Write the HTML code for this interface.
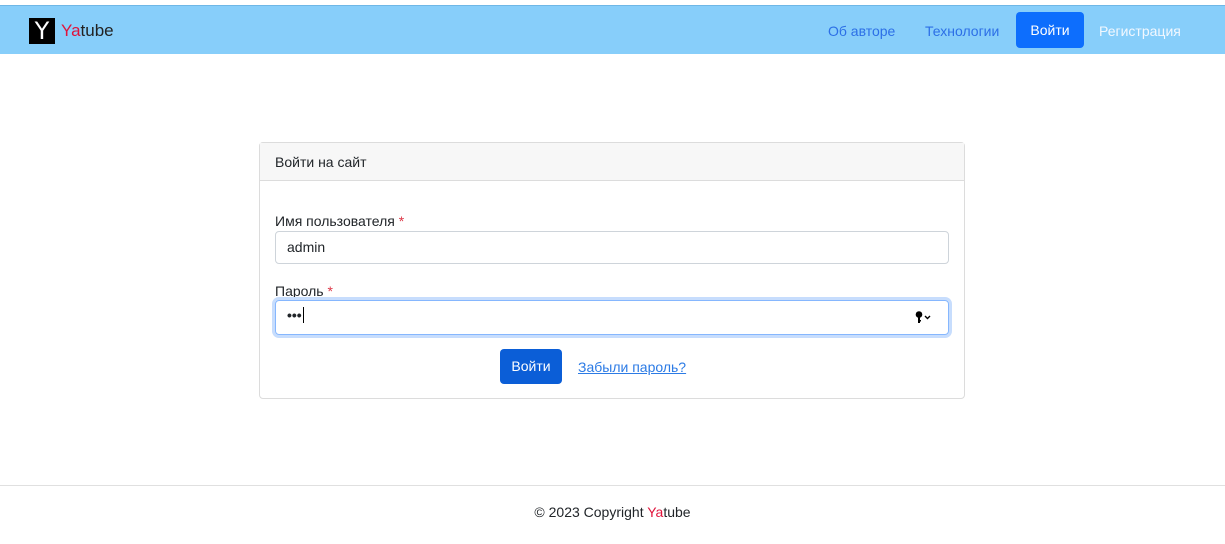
<!DOCTYPE html>
<html><head><meta charset="utf-8"><style>
*{box-sizing:border-box;margin:0;padding:0}
body{width:1225px;height:544px;background:#fff;font-family:"Liberation Sans",sans-serif;position:relative;overflow:hidden;color:#212529}
.nav{position:absolute;top:5px;left:0;width:1225px;height:49px;background:#87cefa;border-top:1px solid #6fb7e6}
.logo{position:absolute;left:29px;top:12px;width:26px;height:26px;background:#000;color:#fff;font-size:24px;font-family:"DejaVu Sans",sans-serif;text-align:center;line-height:26px}
.brand{position:absolute;left:61px;top:15px;font-size:17px;color:#222}
.brand span{color:#e0143c}
.nl{position:absolute;top:17px;font-size:14px;color:#2c6fe6}
.btn{position:absolute;background:#0d6efd;color:#fff;border-radius:4px;font-size:14px;text-align:center}
.card{position:absolute;left:259px;top:142px;width:706px;height:257px;border:1px solid #dcdcdc;border-radius:4px}
.ch{height:38px;background:#f7f7f7;border-bottom:1px solid #dcdcdc;padding:11px 15px;font-size:14px}
.lbl{position:absolute;left:15px;font-size:14px}
.lbl i{color:#dc3545;font-style:normal}
.inp{position:absolute;left:15px;width:674px;height:33px;border:1px solid #ced4da;border-radius:4px;font-size:14px;padding:7px 11px}
</style></head><body>
<div class="nav">
<div class="logo">Y</div>
<div class="brand"><span>Ya</span>tube</div>
<div class="nl" style="left:828px">Об авторе</div>
<div class="nl" style="left:925px">Технологии</div>
<div class="btn" style="left:1016px;top:6px;width:68px;height:36px;line-height:36px">Войти</div>
<div class="nl" style="left:1099px;color:#f2f8ff">Регистрация</div>
</div>
<div class="card">
<div class="ch">Войти на сайт</div>
<div class="lbl" style="top:70px">Имя пользователя <i>*</i></div>
<div class="inp" style="top:88px">admin</div>
<div class="lbl" style="top:140px">Пароль <i>*</i></div>
<div class="inp" style="top:157px;height:35px;border:1px solid #86b7fe;box-shadow:0 0 0 3px #c7ddfd;padding:6px 11px;font-weight:bold">•••<span style="border-left:1px solid #000;margin-left:1px;font-weight:normal">&nbsp;</span>
<svg style="position:absolute;right:17px;top:10px" width="16" height="12" viewBox="0 0 16 12"><circle cx="4" cy="3.5" r="3.3" fill="#000"/><rect x="3" y="5" width="2" height="7" fill="#000"/><rect x="4" y="9" width="2" height="1.5" fill="#000"/><path d="M10 5l2.5 2.5L15 5" stroke="#000" stroke-width="1.4" fill="none"/></svg></div>
<div class="btn" style="left:240px;top:206px;width:62px;height:35px;line-height:35px;background:#0b5ed7">Войти</div>
<div style="position:absolute;left:318px;top:216px;font-size:14px;color:#2c7be5;text-decoration:underline">Забыли пароль?</div>
</div>
<div style="position:absolute;top:485px;left:0;width:1225px;border-top:1px solid #e0e0e0"></div>
<div style="position:absolute;top:504px;left:0;width:1225px;text-align:center;font-size:14px">© 2023 Copyright <span style="color:#e0143c">Ya</span>tube</div>
</body></html>
